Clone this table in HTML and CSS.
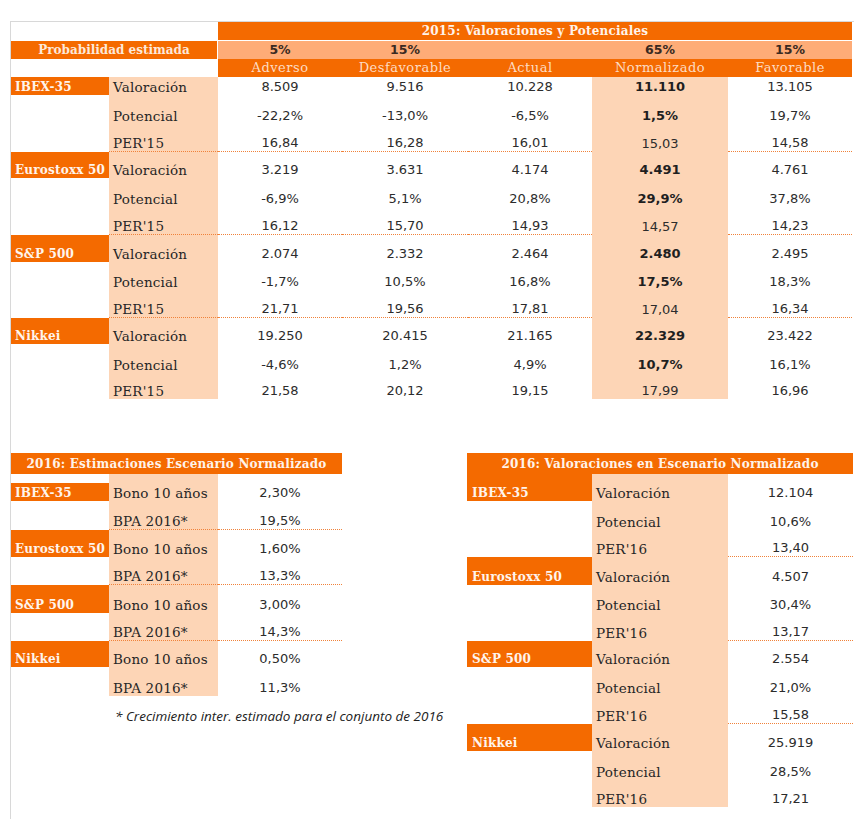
FILE: index.html
```html
<!DOCTYPE html>
<html lang="es">
<head>
<meta charset="utf-8">
<title>Valoraciones y Potenciales</title>
<link rel="stylesheet" href="styles.css">
</head>
<body>
<div class="sheet">
  <div class="main">
    <div class="blank span2"></div>
    <div class="title span5">2015: Valoraciones y Potenciales</div>

    <div class="prob span2">Probabilidad estimada</div>
    <div class="pct">5%</div>
    <div class="pct">15%</div>
    <div class="pct"></div>
    <div class="pct">65%</div>
    <div class="pct">15%</div>

    <div class="blank span2"></div>
    <div class="colh">Adverso</div>
    <div class="colh">Desfavorable</div>
    <div class="colh">Actual</div>
    <div class="colh">Normalizado</div>
    <div class="colh">Favorable</div>

    <!-- IBEX-35 -->
    <div class="lbl">IBEX-35</div><div class="sub">Valoración</div>
    <div class="num">8.509</div><div class="num">9.516</div><div class="num">10.228</div><div class="num norm">11.110</div><div class="num">13.105</div>
    <div class="nolbl"></div><div class="sub">Potencial</div>
    <div class="num">-22,2%</div><div class="num">-13,0%</div><div class="num">-6,5%</div><div class="num norm">1,5%</div><div class="num">19,7%</div>
    <div class="nolbl"></div><div class="sub sep">PER'15</div>
    <div class="num sep">16,84</div><div class="num sep">16,28</div><div class="num sep">16,01</div><div class="num normreg">15,03</div><div class="num sep">14,58</div>

    <!-- Eurostoxx 50 -->
    <div class="lbl">Eurostoxx 50</div><div class="sub">Valoración</div>
    <div class="num">3.219</div><div class="num">3.631</div><div class="num">4.174</div><div class="num norm">4.491</div><div class="num">4.761</div>
    <div class="nolbl"></div><div class="sub">Potencial</div>
    <div class="num">-6,9%</div><div class="num">5,1%</div><div class="num">20,8%</div><div class="num norm">29,9%</div><div class="num">37,8%</div>
    <div class="nolbl"></div><div class="sub sep">PER'15</div>
    <div class="num sep">16,12</div><div class="num sep">15,70</div><div class="num sep">14,93</div><div class="num normreg">14,57</div><div class="num sep">14,23</div>

    <!-- S&P 500 -->
    <div class="lbl">S&amp;P 500</div><div class="sub">Valoración</div>
    <div class="num">2.074</div><div class="num">2.332</div><div class="num">2.464</div><div class="num norm">2.480</div><div class="num">2.495</div>
    <div class="nolbl"></div><div class="sub">Potencial</div>
    <div class="num">-1,7%</div><div class="num">10,5%</div><div class="num">16,8%</div><div class="num norm">17,5%</div><div class="num">18,3%</div>
    <div class="nolbl"></div><div class="sub sep">PER'15</div>
    <div class="num sep">21,71</div><div class="num sep">19,56</div><div class="num sep">17,81</div><div class="num normreg">17,04</div><div class="num sep">16,34</div>

    <!-- Nikkei -->
    <div class="lbl">Nikkei</div><div class="sub">Valoración</div>
    <div class="num">19.250</div><div class="num">20.415</div><div class="num">21.165</div><div class="num norm">22.329</div><div class="num">23.422</div>
    <div class="nolbl"></div><div class="sub">Potencial</div>
    <div class="num">-4,6%</div><div class="num">1,2%</div><div class="num">4,9%</div><div class="num norm">10,7%</div><div class="num">16,1%</div>
    <div class="nolbl"></div><div class="sub">PER'15</div>
    <div class="num">21,58</div><div class="num">20,12</div><div class="num">19,15</div><div class="num normreg">17,99</div><div class="num">16,96</div>
  </div>

  <div class="bottom">
    <div class="est">
      <div class="btitle span3">2016: Estimaciones Escenario Normalizado</div>

      <div class="lbl short">IBEX-35</div><div class="sub">Bono 10 años</div><div class="num val">2,30%</div>
      <div class="nolbl"></div><div class="sub sep">BPA 2016*</div><div class="num val sep">19,5%</div>

      <div class="lbl">Eurostoxx 50</div><div class="sub">Bono 10 años</div><div class="num val">1,60%</div>
      <div class="nolbl"></div><div class="sub sep">BPA 2016*</div><div class="num val sep">13,3%</div>

      <div class="lbl">S&amp;P 500</div><div class="sub">Bono 10 años</div><div class="num val">3,00%</div>
      <div class="nolbl"></div><div class="sub sep">BPA 2016*</div><div class="num val sep">14,3%</div>

      <div class="lbl">Nikkei</div><div class="sub">Bono 10 años</div><div class="num val">0,50%</div>
      <div class="nolbl"></div><div class="sub">BPA 2016*</div><div class="num val">11,3%</div>

      <div class="nolbl"></div><div class="note span2">* Crecimiento inter. estimado para el conjunto de 2016</div>
    </div>

    <div class="val16">
      <div class="btitle span3">2016: Valoraciones en Escenario Normalizado</div>

      <div class="lbl">IBEX-35</div><div class="sub">Valoración</div><div class="num">12.104</div>
      <div class="nolbl"></div><div class="sub">Potencial</div><div class="num">10,6%</div>
      <div class="nolbl"></div><div class="sub">PER'16</div><div class="num sep">13,40</div>

      <div class="lbl">Eurostoxx 50</div><div class="sub">Valoración</div><div class="num">4.507</div>
      <div class="nolbl"></div><div class="sub">Potencial</div><div class="num">30,4%</div>
      <div class="nolbl"></div><div class="sub">PER'16</div><div class="num sep">13,17</div>

      <div class="lbl">S&amp;P 500</div><div class="sub">Valoración</div><div class="num">2.554</div>
      <div class="nolbl"></div><div class="sub">Potencial</div><div class="num">21,0%</div>
      <div class="nolbl"></div><div class="sub">PER'16</div><div class="num sep">15,58</div>

      <div class="lbl">Nikkei</div><div class="sub">Valoración</div><div class="num">25.919</div>
      <div class="nolbl"></div><div class="sub">Potencial</div><div class="num">28,5%</div>
      <div class="nolbl"></div><div class="sub">PER'16</div><div class="num">17,21</div>
    </div>
  </div>
</div>
</body>
</html>
```

FILE: styles.css
```css
* { box-sizing: border-box; }

html, body {
  margin: 0;
  padding: 0;
  background: #ffffff;
}

body {
  font-family: "DejaVu Serif", serif;
  color: #2a2a2a;
}

.sheet {
  margin: 21px 0 0 10px;
  width: 844px;
  min-height: 798px;
  border-left: 1px solid #d8d8d8;
  border-top: 1px solid #d8d8d8;
}

.main {
  display: grid;
  grid-template-columns: 98px 109px 124px 126px 124px 136px 124px;
  grid-template-rows: 19px 18px 18px 18px 29px 28px 26px 29px 28px 27px 28px 28px 26px 29px 26px;
}

.main > div,
.est > div,
.val16 > div {
  display: flex;
  align-items: flex-end;
  justify-content: center;
  line-height: 16px;
  white-space: nowrap;
}

.span2 { grid-column: span 2; }
.span3 { grid-column: span 3; }
.span5 { grid-column: span 5; }

.title {
  background: #f46a00;
  border-bottom: 1px solid #ffffff;
  color: #fff3ea;
  font-weight: bold;
  font-size: 12px;
  letter-spacing: 0.2px;
  align-items: center !important;
}

.prob {
  background: #f46a00;
  border-right: 1px solid #ffffff;
  color: #fde9da;
  font-weight: bold;
  font-size: 12px;
  align-items: center !important;
}

.pct {
  background: #feac77;
  font-family: "DejaVu Sans", sans-serif;
  font-weight: bold;
  font-size: 12.5px;
  color: #3a2a22;
  align-items: center !important;
}

.colh {
  background: #f46a00;
  color: #fddcc4;
  font-size: 13px;
  letter-spacing: 0.5px;
  align-items: center !important;
}

.lbl {
  background: #f46a00;
  color: #fff4ec;
  font-weight: bold;
  font-size: 12px;
  letter-spacing: 0.2px;
  justify-content: flex-start !important;
  padding-left: 4px;
}

.lbl.short {
  align-self: end;
  height: 18px;
}

.sub {
  background: #fdd5b6;
  font-size: 13.5px;
  letter-spacing: 0.2px;
  color: #262626;
  justify-content: flex-start !important;
  padding-left: 4px;
}

.num {
  font-family: "DejaVu Sans", sans-serif;
  font-size: 13px;
  color: #2c2c2c;
}

.norm {
  background: #fdd5b6;
  font-weight: bold;
  color: #1f1f1f;
}

.normreg {
  background: #fdd5b6;
}

.sep {
  border-bottom: 1px dotted #f0823a;
}

.bottom {
  display: flex;
  gap: 125px;
  margin-top: 54px;
}

.est {
  display: grid;
  grid-template-columns: 98px 109px 124px;
  grid-template-rows: 21px 27px 29px 27px 28px 28px 28px 26px 29px 28px;
  width: 331px;
}

.val16 {
  display: grid;
  grid-template-columns: 125px 136px 125px;
  grid-template-rows: 21px 27px 29px 27px 28px 28px 28px 26px 29px 28px 27px 29px 27px;
  width: 386px;
}

.val16 .lbl { padding-left: 5px; }

.btitle {
  background: #f46a00;
  color: #fff3ea;
  font-weight: bold;
  font-size: 12px;
  letter-spacing: 0.2px;
  align-items: center !important;
}

.note {
  font-family: "Open Sans", sans-serif;
  font-style: italic;
  font-size: 13.5px;
  color: #222222;
  justify-content: flex-start !important;
  padding-left: 6px;
  overflow: visible;
}
```
